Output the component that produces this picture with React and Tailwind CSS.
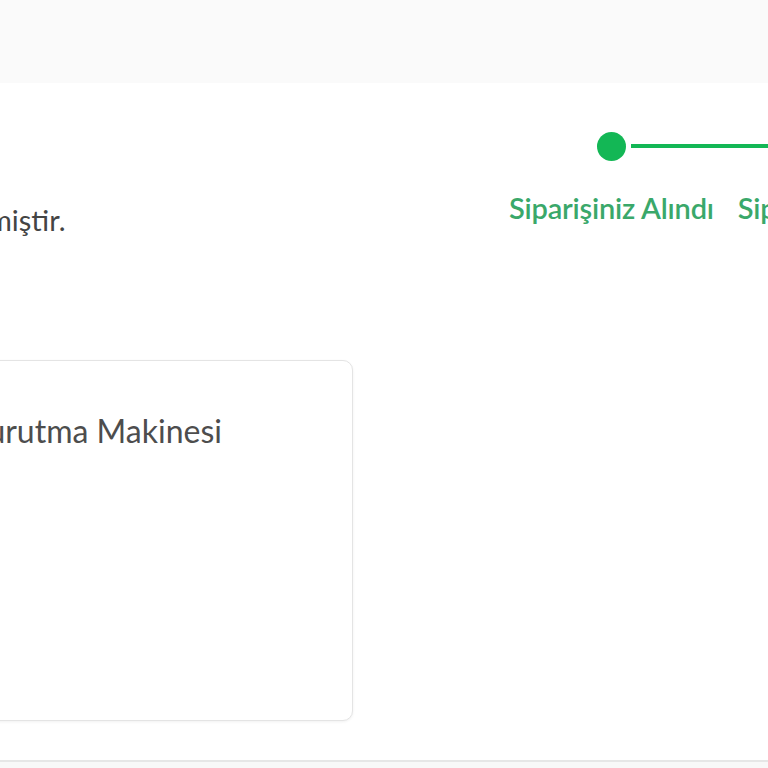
import React from 'react';

const steps = [
  { label: 'Siparişiniz Alındı', done: true },
  { label: 'Siparişiniz Hazırlanıyor', done: true },
];

function Step({ step, first }) {
  return (
    <div className="flex flex-col items-center px-[12px] shrink-0">
      <div className="flex items-center w-full h-[30px]">
        <div className={`flex-1 h-[4px] -ml-[12px] ${first ? '' : 'bg-[#13b755]'}`} />
        <div className="w-[29px] h-[29px] rounded-full bg-[#13b755] mx-[5px] shrink-0" />
        <div className="flex-1 h-[4px] bg-[#13b755] -mr-[12px]" />
      </div>
      <span className="mt-[26px] text-[29px] leading-[42px] font-semibold text-[#3aa86a] whitespace-nowrap tracking-[-0.2px]">
        {step.label}
      </span>
    </div>
  );
}

export default function App() {
  return (
    <div className="w-[768px] h-[768px] overflow-hidden bg-[#f8f8f8] font-['Lato','Noto_Sans',sans-serif]">
      {/* ust bar */}
      <div className="h-[83px] bg-[#fafafa]" />

      <main className="bg-white h-[679px] border-b-2 border-[#e6e6e6] flex flex-col">
        <div className="flex items-start pt-[48px]">
          <p className="-ml-[12px] mt-[67px] text-[29px] leading-[44px] text-[#444] whitespace-nowrap w-[509px] shrink-0">
            miştir.
          </p>
          <div className="flex">
            {steps.map((s, i) => (
              <Step key={i} step={s} first={i === 0} />
            ))}
          </div>
        </div>

        <div className="mt-[118px] -ml-[40px] w-[393px] h-[361px] rounded-[10px] border border-[#e4e4e4] shadow-[0_1px_3px_rgba(0,0,0,0.06)] bg-white pl-[24px] pt-[46px]">
          <p className="-ml-[18px] text-[32px] leading-[48px] text-[#4d4d4d] whitespace-nowrap">Kurutma Makinesi</p>
        </div>
      </main>
    </div>
  );
}
